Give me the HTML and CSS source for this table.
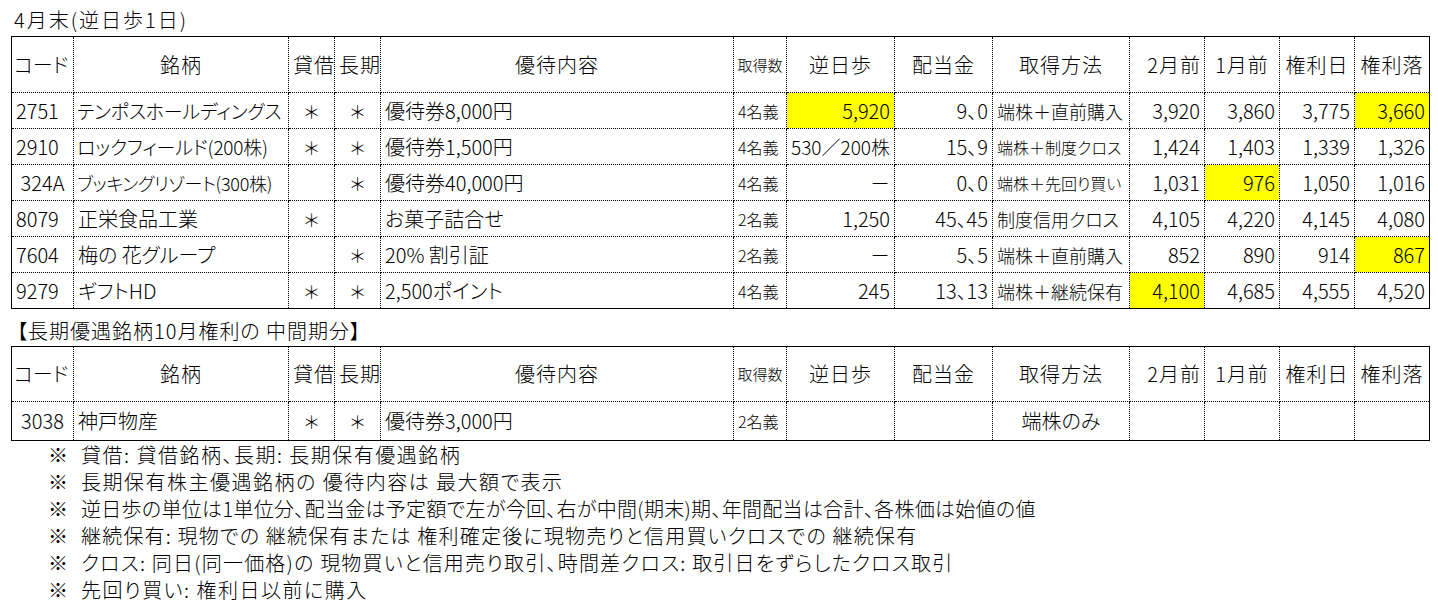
FILE: index.html
```html
<!DOCTYPE html>
<html lang="ja">
<head>
<meta charset="utf-8">
<title>4月末（逆日歩1日）</title>
<link rel="stylesheet" href="styles.css">
</head>
<body>
<div class="page">
  <div class="title">4月末(逆日歩1日)</div>
  <table class="sheet">
    <colgroup>
      <col class="w-code"><col class="w-name"><col class="w-flag"><col class="w-flag"><col class="w-perk"><col class="w-qty"><col class="w-fee"><col class="w-div"><col class="w-method"><col class="w-price"><col class="w-price"><col class="w-price"><col class="w-price">
    </colgroup>
    <tr class="head">
      <th class="l">コード</th><th>銘柄</th><th>貸借</th><th>長期</th><th>優待内容</th><th class="small">取得数</th><th>逆日歩</th><th>配当金</th><th>取得方法</th><th class="r">2月前</th><th>1月前</th><th>権利日</th><th>権利落</th>
    </tr>
    <tr class="row">
      <td class="code">2751</td><td class="name fit19">テンポスホールディングス</td><td class="c ast">＊</td><td class="c ast">＊</td><td class="perk">優待券8,000円</td><td class="qty">4名義</td><td class="num hl">5,920</td><td class="num">9、0</td><td class="method">端株＋直前購入</td><td class="num">3,920</td><td class="num">3,860</td><td class="num">3,775</td><td class="num hl">3,660</td>
    </tr>
    <tr class="row">
      <td class="code">2910</td><td class="name fit19">ロックフィールド(200株)</td><td class="c ast">＊</td><td class="c ast">＊</td><td class="perk">優待券1,500円</td><td class="qty">4名義</td><td class="num tight">530／200株</td><td class="num">15、9</td><td class="method small">端株＋制度クロス</td><td class="num">1,424</td><td class="num">1,403</td><td class="num">1,339</td><td class="num">1,326</td>
    </tr>
    <tr class="row">
      <td class="code mid">324A</td><td class="name fit18">ブッキングリゾート(300株)</td><td class="c ast"></td><td class="c ast">＊</td><td class="perk">優待券40,000円</td><td class="qty">4名義</td><td class="num">－</td><td class="num">0、0</td><td class="method small">端株＋先回り買い</td><td class="num">1,031</td><td class="num hl">976</td><td class="num">1,050</td><td class="num">1,016</td>
    </tr>
    <tr class="row">
      <td class="code">8079</td><td class="name">正栄食品工業</td><td class="c ast">＊</td><td class="c ast"></td><td class="perk">お菓子詰合せ</td><td class="qty">2名義</td><td class="num">1,250</td><td class="num">45、45</td><td class="method">制度信用クロス</td><td class="num">4,105</td><td class="num">4,220</td><td class="num">4,145</td><td class="num">4,080</td>
    </tr>
    <tr class="row">
      <td class="code">7604</td><td class="name">梅の 花グループ</td><td class="c ast"></td><td class="c ast">＊</td><td class="perk">20% 割引証</td><td class="qty">2名義</td><td class="num">－</td><td class="num">5、5</td><td class="method">端株＋直前購入</td><td class="num">852</td><td class="num">890</td><td class="num">914</td><td class="num hl">867</td>
    </tr>
    <tr class="row">
      <td class="code">9279</td><td class="name">ギフトHD</td><td class="c ast">＊</td><td class="c ast">＊</td><td class="perk">2,500ポイント</td><td class="qty">4名義</td><td class="num">245</td><td class="num">13、13</td><td class="method">端株＋継続保有</td><td class="num hl">4,100</td><td class="num">4,685</td><td class="num">4,555</td><td class="num">4,520</td>
    </tr>
  </table>

  <div class="section">【長期優遇銘柄10月権利の 中間期分】</div>
  <table class="sheet">
    <colgroup>
      <col class="w-code"><col class="w-name"><col class="w-flag"><col class="w-flag"><col class="w-perk"><col class="w-qty"><col class="w-fee"><col class="w-div"><col class="w-method"><col class="w-price"><col class="w-price"><col class="w-price"><col class="w-price">
    </colgroup>
    <tr class="head2">
      <th class="l">コード</th><th>銘柄</th><th>貸借</th><th>長期</th><th>優待内容</th><th class="small">取得数</th><th>逆日歩</th><th>配当金</th><th>取得方法</th><th class="r">2月前</th><th>1月前</th><th>権利日</th><th>権利落</th>
    </tr>
    <tr class="row2">
      <td class="code mid">3038</td><td class="name">神戸物産</td><td class="c ast">＊</td><td class="c ast">＊</td><td class="perk">優待券3,000円</td><td class="qty">2名義</td><td class="num"></td><td class="num"></td><td class="c">端株のみ</td><td class="num"></td><td class="num"></td><td class="num"></td><td class="num"></td>
    </tr>
  </table>

  <ul class="notes">
    <li class="note"><span class="mark">※</span><span>貸借: 貸借銘柄、長期: 長期保有優遇銘柄</span></li>
    <li class="note"><span class="mark">※</span><span>長期保有株主優遇銘柄の 優待内容は 最大額で表示</span></li>
    <li class="note dense"><span class="mark">※</span><span>逆日歩の単位は1単位分、配当金は予定額で左が今回、右が中間(期末)期、年間配当は合計、各株価は始値の値</span></li>
    <li class="note medium"><span class="mark">※</span><span>継続保有: 現物での 継続保有または 権利確定後に現物売りと信用買いクロスでの 継続保有</span></li>
    <li class="note medium"><span class="mark">※</span><span>クロス: 同日(同一価格)の 現物買いと信用売り取引、時間差クロス: 取引日をずらしたクロス取引</span></li>
    <li class="note"><span class="mark">※</span><span>先回り買い: 権利日以前に購入</span></li>
  </ul>
</div>
</body>
</html>
```
FILE: styles.css
```css
* {
  box-sizing: border-box;
}

body {
  margin: 0;
  background: #ffffff;
  color: #000000;
  font-family: "Noto Sans CJK JP", "Noto Sans CJK SC", sans-serif;
  font-size: 20px;
  font-weight: 300;
  font-feature-settings: "palt";
}

.page {
  padding-left: 11px;
}

.title {
  height: 36px;
  padding-top: 4px;
  padding-left: 3px;
  line-height: 32px;
  letter-spacing: 2px;
  white-space: nowrap;
}

.sheet {
  border-collapse: collapse;
  table-layout: fixed;
  width: 1418px;
  border: 1px solid #000000;
}

.w-code { width: 62px; }
.w-name { width: 215px; }
.w-flag { width: 46px; }
.w-perk { width: 353px; }
.w-qty { width: 53px; }
.w-fee { width: 108px; }
.w-div { width: 98px; }
.w-method { width: 137px; }
.w-price { width: 75px; }

.sheet th,
.sheet td {
  border: 1px dotted #000000;
  padding: 0 4px;
  white-space: nowrap;
  overflow: hidden;
  vertical-align: middle;
  font-weight: 300;
  line-height: 24px;
}

.sheet th {
  text-align: center;
  letter-spacing: 1px;
  font-feature-settings: normal;
}

.sheet th.l {
  text-align: left;
  padding-left: 2px;
  letter-spacing: 0;
  font-feature-settings: "palt";
}

.sheet th.r {
  text-align: right;
  padding-right: 3px;
}

.sheet th.small {
  font-size: 15px;
  letter-spacing: 0;
  padding: 0 2px;
}

.head { height: 56px; }
.row { height: 36px; }
.head2 { height: 55px; }
.row2 { height: 39px; }

.code {
  padding-left: 3px;
  text-align: left;
}

.code.mid {
  text-align: center;
  padding: 0;
}

.name {
  text-align: left;
}

.name.fit19 {
  font-size: 19px;
  letter-spacing: -0.2px;
  padding-left: 3px;
}

.name.fit18 {
  font-size: 18px;
  letter-spacing: -0.3px;
  padding-left: 3px;
}

.c {
  text-align: center;
}

.ast {
  font-size: 18px;
}

.perk {
  padding-left: 6px;
  text-align: left;
}

.qty {
  font-size: 16px;
  padding: 0 2px;
  text-align: left;
}

.num {
  text-align: right;
  padding-right: 5px;
}

.tight {
  padding: 0 4px 0 2px;
  font-size: 19px;
}

.method {
  padding-left: 5px;
  text-align: left;
  font-size: 18px;
}

.method.small {
  font-size: 16px;
}

.hl {
  background: #ffff00;
}

.section {
  height: 37px;
  padding-top: 7px;
  padding-left: 6px;
  line-height: 30px;
  letter-spacing: 1px;
  white-space: nowrap;
}

.notes {
  list-style: none;
  margin: 0;
  padding: 0 0 0 37px;
}

.note {
  display: flex;
  height: 27px;
  line-height: 27px;
  letter-spacing: 1.5px;
  white-space: nowrap;
}

.note.dense {
  letter-spacing: 0.3px;
}

.note.medium {
  letter-spacing: 1.2px;
}

.mark {
  width: 33px;
  flex: none;
  letter-spacing: 0;
}
```
